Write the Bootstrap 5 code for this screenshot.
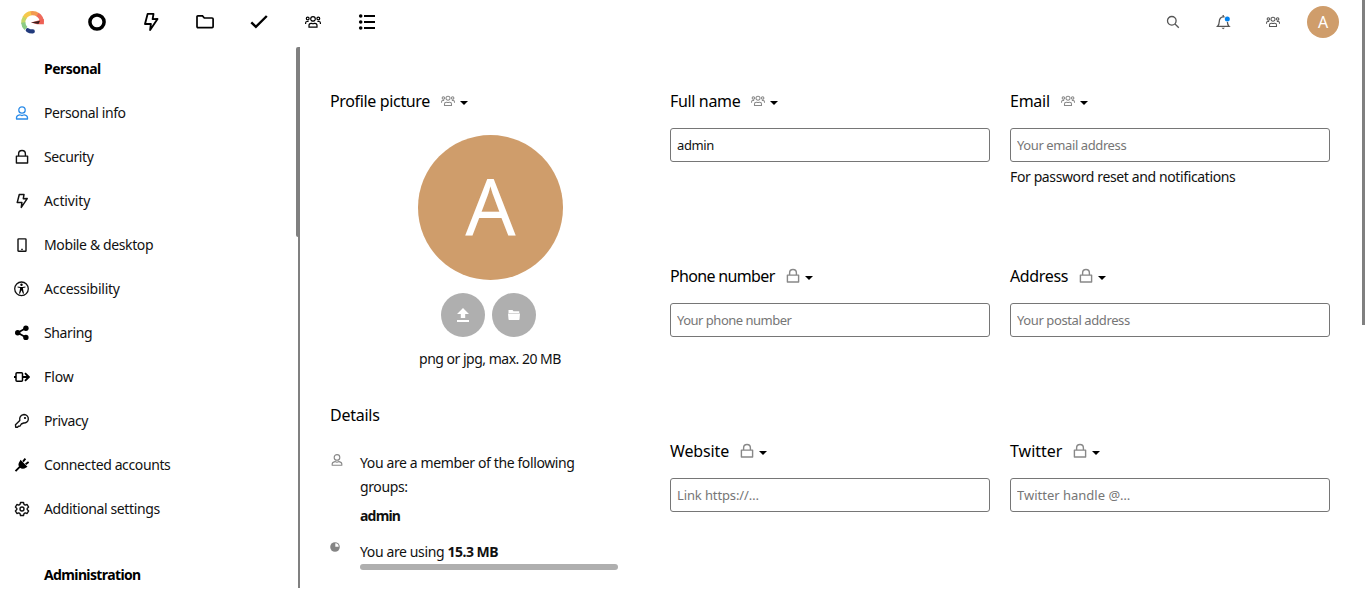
<!DOCTYPE html>
<html lang="en">
<head>
<meta charset="utf-8">
<meta name="viewport" content="width=device-width, initial-scale=1">
<title>Personal info</title>
<link href="https://cdn.jsdelivr.net/npm/bootstrap@5.3.0/dist/css/bootstrap.min.css" rel="stylesheet">
<style>
body{font-family:"Noto Sans",sans-serif;font-size:14px;color:#111;background:#fff;height:592px;overflow:hidden}
.topbar{height:44px;padding:0 27px 0 20px}
.app-nav{margin-left:24px}
.app-link{width:54px;height:44px;color:#000}
.tool-link{width:50px;height:44px;color:#555}
.user-dot{width:32px;height:32px;background:#cf9d6b;color:#fff;font-size:16px;margin-left:9px}
.side{width:300px;height:541px;margin-top:3px;border-right:2px solid #808080;overflow:hidden}
.side-thumb{left:296px;top:47px;width:4px;height:190px;background:#808080;border-radius:2px}
.page-thumb{left:1362px;top:0;width:3px;height:325px;background:#808080}
.side-row{height:44px;padding-left:14px;gap:14px;color:#111;letter-spacing:-.38px}
.side-row span{padding-bottom:2px}
.side-head{height:44px;padding:0 0 2px 44px;font-weight:700;color:#000;letter-spacing:-.62px}
.side-gap{height:22px}
.settings{display:grid;grid-template-columns:320px 320px 320px;grid-auto-rows:175px;gap:0 20px;padding:47px 0 0 30px}
.tall{grid-row:span 3}
.title-row{height:20px;font-size:16px;line-height:20px;color:#000;letter-spacing:-.35px}
.scope{width:18px;margin-left:9px;color:#888}
.arrow{width:0;height:0;border:4px solid transparent;border-top-color:#000;border-bottom:0;margin:3px 0 0 3px}
.field{height:34px;margin-top:17px;padding:0 6px;font-size:13px;letter-spacing:-.4px;color:#111;border:1px solid #767676;border-radius:3px}
.field::placeholder{color:#767676;opacity:1}
.ls-0{letter-spacing:0}
.ls-1{letter-spacing:-.12px}
.ls-2{letter-spacing:-.25px}
.ls-5{letter-spacing:-.5px}
.ls-6{letter-spacing:-.66px}
.big-avatar{width:145px;height:145px;background:#cf9d6b;color:#fff;font-size:79px;margin:24px 0 0 88px;padding-bottom:4px}
.round-btn{width:44px;height:44px;background:#afafaf;color:#fff}
.round-row{gap:7px;margin:13px 0 0 111px}
.line{line-height:24px;letter-spacing:-.38px}
.hint{margin-top:3px}
.upload-note{margin-top:10px;letter-spacing:-.5px}
.details-title{margin-top:34px}
.info{gap:16px;margin-top:26px}
.info + .info{margin-top:12px}
.group-name{margin-top:5px;letter-spacing:-.8px}
.info-icon{width:14px;color:#888;flex:none;padding-top:2px}
.usage{width:258px;height:6px;background:#afafaf;border-radius:3px}
svg{display:block;flex:none}
</style>
</head>
<body>
<svg class="d-none" aria-hidden="true">
<symbol id="bolt" viewBox="0 0 16 16"><path d="M5.300 1.500H10L9.300 5.700l3.900-.1L7.300 14.400l.6-4.900-4.700.1z" fill="none" stroke="currentColor" stroke-width="1.500" stroke-linejoin="round"/></symbol>
<symbol id="users" viewBox="0 0 16 16"><g fill="none" stroke="currentColor" stroke-width="1.200"><circle cx="8" cy="4.900" r="2.300"/><circle cx="2.700" cy="4.500" r="1.400"/><circle cx="13.300" cy="4.500" r="1.400"/><path d="M4 13.100v-1.600c0-1.300.8-2.100 2-2.100h.6q1.400.7 2.800 0h.6c1.200 0 2 .8 2 2.100v1.600zM.6 10V9c0-.9.600-1.500 1.400-1.500h1.600M15.400 10V9c0-.9-.6-1.500-1.400-1.500h-1.600"/></g></symbol>
<symbol id="user" viewBox="0 0 16 16"><g fill="none" stroke="currentColor" stroke-width="1.300"><circle cx="8" cy="5" r="3.200"/><path d="M2.500 14v-1.300c0-1.600 1.600-2.600 3.200-2.900 1.500.9 3.100.9 4.600 0 1.600.3 3.200 1.300 3.200 2.900V14z" stroke-linejoin="round"/></g></symbol>
<symbol id="lock" viewBox="0 0 16 16"><path d="M2.400 7.100h11.200v6.900H2.400zM4.600 7V4.900a3.400 3.400 0 0 1 6.800 0V7" fill="none" stroke="currentColor" stroke-width="1.400" stroke-linejoin="round"/></symbol>
</svg>

<header class="topbar d-flex align-items-center">
  <svg width="26" height="26" viewBox="0 0 26 26" fill="none" stroke-width="4.200">
    <path d="M4.400 8.900A9.300 9.300 0 0 1 11.500 4.100" stroke="#f6c84c"/>
    <path d="M10.900 4.200A9.300 9.300 0 0 1 18 5.900" stroke="#f39a50"/>
    <path d="M17.500 5.500A9.300 9.300 0 0 1 21.800 13.300" stroke="#ee6b5c"/>
    <path d="M4.800 8.300A9.300 9.300 0 0 0 3.300 14.600" stroke="#c3d766"/>
    <path d="M3.200 13.500A9.300 9.300 0 0 0 6 19.500" stroke="#8ccb84"/>
    <path d="M11 13.600 23.900 10v5.200H17z" fill="#ee6055"/><path d="m11 13.600 9-1.800-1.500 3.100z" fill="#3a2020"/>
    <path d="M7.800 21.200q2.300 1.400 5 1.200" stroke="#213a7c" stroke-linecap="round"/>
  </svg>
  <nav class="app-nav d-flex">
    <a class="app-link d-flex align-items-center justify-content-center" href="#" aria-label="Dashboard"><svg width="18" height="18" viewBox="0 0 18 18"><circle cx="9" cy="9" r="7.100" fill="none" stroke="currentColor" stroke-width="3.500"/></svg></a>
    <a class="app-link d-flex align-items-center justify-content-center" href="#" aria-label="Activity"><svg width="20" height="20"><use href="#bolt"/></svg></a>
    <a class="app-link d-flex align-items-center justify-content-center" href="#" aria-label="Files"><svg width="20" height="16" viewBox="0 0 20 16"><path d="M2 2.800q0-.9.9-.9h4.600L9.300 4h7.800q1 0 1 1v7.600q0 1-1 1H3q-1 0-1-1z" fill="none" stroke="currentColor" stroke-width="1.700"/></svg></a>
    <a class="app-link d-flex align-items-center justify-content-center" href="#" aria-label="Tasks"><svg width="18" height="16" viewBox="0 0 18 16"><path d="m1.300 8.300 4.600 4.500L16.800 2" fill="none" stroke="currentColor" stroke-width="2.400"/></svg></a>
    <a class="app-link d-flex align-items-center justify-content-center" href="#" aria-label="Contacts"><svg width="16" height="16"><use href="#users"/></svg></a>
    <a class="app-link d-flex align-items-center justify-content-center" href="#" aria-label="Lists"><svg width="18" height="18" viewBox="0 0 18 18"><path d="M6 3h11M6 9h11M6 15h11" stroke="currentColor" stroke-width="2.100"/><g fill="currentColor"><circle cx="2.700" cy="3" r="1.800"/><circle cx="2.700" cy="9" r="1.800"/><circle cx="2.700" cy="15" r="1.800"/></g></svg></a>
  </nav>
  <div class="d-flex align-items-center ms-auto">
    <a class="tool-link d-flex align-items-center justify-content-center" href="#" aria-label="Search"><svg width="14" height="14" viewBox="0 0 14 14" fill="none" stroke="currentColor" stroke-width="1.300"><circle cx="5.800" cy="5.800" r="4.300"/><path d="m9 9 3.800 3.700"/></svg></a>
    <a class="tool-link d-flex align-items-center justify-content-center" href="#" aria-label="Notifications"><svg width="16" height="16" viewBox="0 0 16 16"><path d="M2.500 12.400q1.600-1.500 1.700-4.400C4.400 4.700 5.500 2.900 8.200 2.800s4.100 1.700 4.200 5.200q.1 2.900 1.700 4.400zM8.200 1v1.800" fill="none" stroke="currentColor" stroke-width="1.300"/><path d="M6.500 13.800h3.400l-1.700 1.500z" fill="currentColor"/><circle cx="12.300" cy="4.900" r="3.100" fill="#fff"/><circle cx="12.300" cy="4.900" r="2.500" fill="#0082f0"/></svg></a>
    <a class="tool-link d-flex align-items-center justify-content-center" href="#" aria-label="Contacts"><svg width="14" height="14"><use href="#users"/></svg></a>
    <div class="user-dot rounded-circle d-flex align-items-center justify-content-center">A</div>
  </div>
</header>

<div class="d-flex align-items-start">
  <aside class="side flex-shrink-0">
    <div class="side-head d-flex align-items-center ls-5">Personal</div>
    <a class="side-row d-flex align-items-center text-decoration-none" href="#"><svg width="16" height="16" color="#2a8be8"><use href="#user"/></svg><span>Personal info</span></a>
    <a class="side-row d-flex align-items-center text-decoration-none" href="#"><svg width="16" height="16"><use href="#lock"/></svg><span>Security</span></a>
    <a class="side-row d-flex align-items-center text-decoration-none" href="#"><svg width="16" height="16"><use href="#bolt"/></svg><span class="ls-1">Activity</span></a>
    <a class="side-row d-flex align-items-center text-decoration-none" href="#"><svg width="16" height="16" viewBox="0 0 16 16"><rect x="4" y="1.900" width="8" height="12.400" rx=".6" fill="none" stroke="currentColor" stroke-width="1.400"/><path d="M7 12.300h2" stroke="currentColor"/></svg><span>Mobile &amp; desktop</span></a>
    <a class="side-row d-flex align-items-center text-decoration-none" href="#"><svg width="16" height="16" viewBox="0 0 16 16"><circle cx="7.500" cy="7.800" r="6.800" fill="none" stroke="currentColor" stroke-width="1.300"/><circle cx="7.500" cy="3.700" r="1.200"/><path d="m3.600 5.400 2.800.5h2.200l2.800-.5v1.100l-2.500.6.3 2 .8 3.300-1 .4-1.300-3.400h-.4L6 12.800l-1-.4.8-3.300.3-2-2.500-.6z"/></svg><span class="ls-2">Accessibility</span></a>
    <a class="side-row d-flex align-items-center text-decoration-none" href="#"><svg width="16" height="16" viewBox="0 0 16 16"><path d="m11.700 3.300-8 4.500 8 4.500" fill="none" stroke="#000" stroke-width="1.700"/><circle cx="11.900" cy="3.200" r="2.700"/><circle cx="3.700" cy="7.800" r="2.700"/><circle cx="11.900" cy="12.400" r="2.700"/></svg><span>Sharing</span></a>
    <a class="side-row d-flex align-items-center text-decoration-none" href="#"><svg width="16" height="16" viewBox="0 0 16 16" fill="none" stroke="#000"><rect x="2" y="3.800" width="6.500" height="8.400" rx="1" stroke-width="1.500"/><path d="M0 8h2M8.500 8h6M11 4.200 14.800 8 11 11.800" stroke-width="1.900"/></svg><span class="ls-1">Flow</span></a>
    <a class="side-row d-flex align-items-center text-decoration-none" href="#"><svg width="16" height="16" viewBox="0 0 16 16"><path d="M10 1.500a4.300 4.300 0 0 1 4.300 4.700c-.2 2.700-2.500 4-4.700 3.800L7.300 11 6.100 13l-1.800.3-.6.900H1.700l-.2-2.400 4.300-4.300C5.200 4.400 6.800 1.800 10 1.500z" fill="none" stroke="currentColor" stroke-width="1.400" stroke-linejoin="round"/><circle cx="11" cy="5" r="1.100"/></svg><span>Privacy</span></a>
    <a class="side-row d-flex align-items-center text-decoration-none" href="#"><svg width="16" height="16" viewBox="0 0 16 16"><path d="m1.500 14.200 5-5M9 4.600l2.400-2.900M11.600 7.200l3-2.200" stroke="#000" stroke-width="1.900"/><path d="m6.500 2.800 7 7-1.300.6c-2.300 1.700-4.500 1.800-6.500 0-2-2.100-1.400-4.200.2-6.400z"/></svg><span>Connected accounts</span></a>
    <a class="side-row d-flex align-items-center text-decoration-none" href="#"><svg width="16" height="16" viewBox="0 0 16 16" fill="none" stroke="#111" stroke-width="1.400" stroke-linejoin="round"><path d="M6.500 1.500h3l.5 1.900 1.200.7 1.900-.6 1.500 2.600L13.200 7.400v1.200l1.400 1.300-1.500 2.600-1.900-.6-1.200.7-.5 1.900h-3L6 12.600l-1.200-.7-1.900.6-1.500-2.600 1.400-1.300V7.400L1.400 6.100l1.500-2.600 1.900.6L6 3.400z"/><circle cx="8" cy="8" r="2"/></svg><span>Additional settings</span></a>
    <div class="side-gap"></div>
    <div class="side-head d-flex align-items-center">Administration</div>
  </aside>

  <main class="settings">
    <section class="tall">
      <div class="title-row d-flex align-items-center"><span>Profile picture</span><span class="scope d-flex justify-content-center"><svg width="14" height="14"><use href="#users"/></svg></span><span class="arrow"></span></div>
      <div class="big-avatar rounded-circle d-flex align-items-center justify-content-center">A</div>
      <div class="round-row d-flex">
        <button class="round-btn rounded-circle border-0 p-0 d-flex align-items-center justify-content-center" aria-label="Upload"><svg width="14" height="16" viewBox="0 0 14 16" fill="currentColor"><path d="m7 1 6 6H9.200v4H4.800V7H1zM1 13h12v2H1z"/></svg></button>
        <button class="round-btn rounded-circle border-0 p-0 d-flex align-items-center justify-content-center" aria-label="Choose from files"><svg width="14" height="12" viewBox="0 0 14 12" fill="currentColor"><path d="M1.500 1h4l1 1.200h5.700V4H1.500zM1 4.600h12l-.5 5.700q0 .7-.7.7H2.200q-.7 0-.7-.7z"/></svg></button>
      </div>
      <div class="line upload-note text-center">png or jpg, max. 20 MB</div>
      <div class="title-row details-title ls-2">Details</div>
      <div class="info d-flex">
        <div class="info-icon"><svg width="14" height="14"><use href="#user"/></svg></div>
        <div><div class="line">You are a member of the following<br>groups:</div><div class="line group-name fw-bold">admin</div></div>
      </div>
      <div class="info d-flex">
        <div class="info-icon"><svg width="10" height="10" viewBox="0 0 10 10"><circle cx="5" cy="5" r="4.800" fill="#858585"/><path d="M5.300 4.700V1.300a3.500 3.500 0 0 1 3.400 3.400z" fill="#fff"/></svg></div>
        <div><div class="line">You are using <b class="ls-5">15.3 MB</b></div><div class="usage"></div></div>
      </div>
    </section>
    <section>
      <div class="title-row d-flex align-items-center"><span>Full name</span><span class="scope d-flex justify-content-center"><svg width="14" height="14"><use href="#users"/></svg></span><span class="arrow"></span></div>
      <input class="field w-100 d-block" value="admin" aria-label="Full name">
    </section>
    <section>
      <div class="title-row d-flex align-items-center"><span class="ls-2">Email</span><span class="scope d-flex justify-content-center"><svg width="14" height="14"><use href="#users"/></svg></span><span class="arrow"></span></div>
      <input class="field w-100 d-block" placeholder="Your email address" aria-label="Email">
      <div class="line hint">For password reset and notifications</div>
    </section>
    <section>
      <div class="title-row d-flex align-items-center"><span class="ls-6">Phone number</span><span class="scope d-flex justify-content-center"><svg width="16" height="16"><use href="#lock"/></svg></span><span class="arrow"></span></div>
      <input class="field w-100 d-block ls-5" placeholder="Your phone number" aria-label="Phone number">
    </section>
    <section>
      <div class="title-row d-flex align-items-center"><span>Address</span><span class="scope d-flex justify-content-center"><svg width="16" height="16"><use href="#lock"/></svg></span><span class="arrow"></span></div>
      <input class="field w-100 d-block" placeholder="Your postal address" aria-label="Address">
    </section>
    <section>
      <div class="title-row d-flex align-items-center"><span class="ls-1">Website</span><span class="scope d-flex justify-content-center"><svg width="16" height="16"><use href="#lock"/></svg></span><span class="arrow"></span></div>
      <input class="field w-100 d-block ls-1" placeholder="Link https://…" aria-label="Website">
    </section>
    <section>
      <div class="title-row d-flex align-items-center"><span class="ls-0">Twitter</span><span class="scope d-flex justify-content-center"><svg width="16" height="16"><use href="#lock"/></svg></span><span class="arrow"></span></div>
      <input class="field w-100 d-block ls-0" placeholder="Twitter handle @…" aria-label="Twitter">
    </section>
  </main>
</div>
<div class="side-thumb position-absolute"></div>
<div class="page-thumb position-absolute"></div>
<script src="https://cdn.jsdelivr.net/npm/bootstrap@5.3.0/dist/js/bootstrap.bundle.min.js"></script>
</body>
</html>
